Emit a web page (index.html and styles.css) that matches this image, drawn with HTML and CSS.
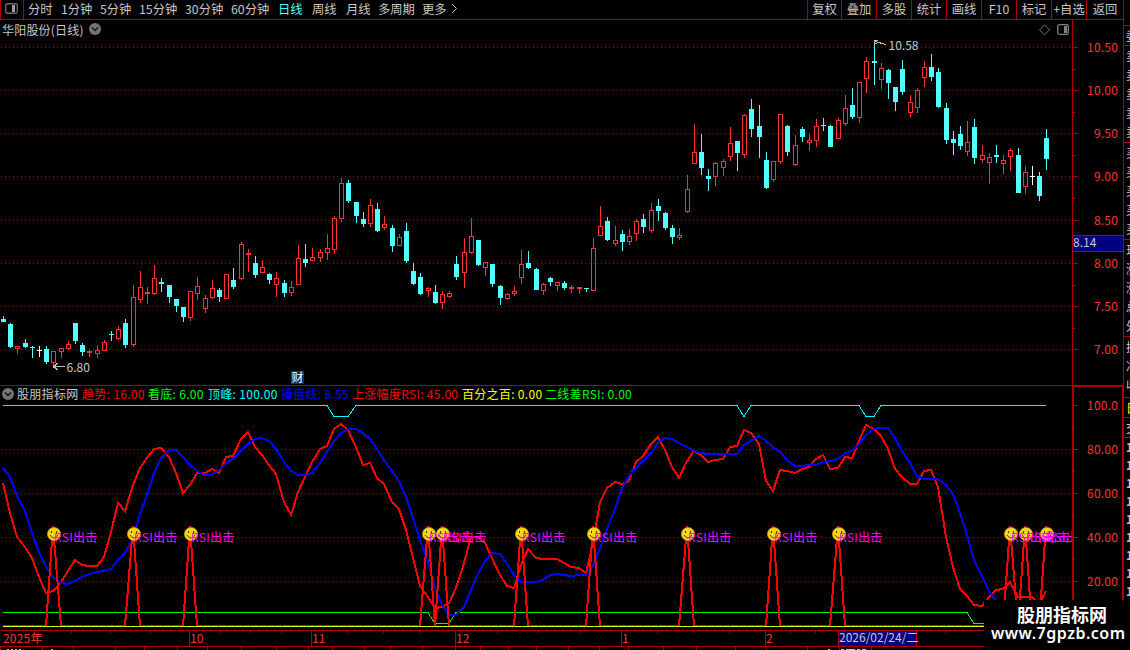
FILE: index.html
```html
<!DOCTYPE html>
<html lang="zh-CN">

<head>
    <meta charset="UTF-8">
    <meta name="viewport" content="width=device-width, initial-scale=1.0">
    <title>华阳股份(日线)</title>
    <link rel="stylesheet" href="styles.css">
    <script src="chart.js"></script>
</head>

<body>
    <div class="app">
        <!-- 左侧主区域 -->
        <div class="main">
            <!-- 顶部工具栏 -->
            <div class="toolbar">
                <div class="layout-btn">
                    <svg width="13" height="11" viewBox="0 0 13 11">
                        <rect x=".75" y=".75" width="11.5" height="9.5" rx="1.5" fill="none" stroke="#707070" stroke-width="1.3" />
                        <rect x="7" y="2" width="3" height="7" fill="#a0a0a0" />
                    </svg>
                </div>
                <ul class="periods">
                    <li>分时</li>
                    <li>1分钟</li>
                    <li>5分钟</li>
                    <li>15分钟</li>
                    <li>30分钟</li>
                    <li>60分钟</li>
                    <li class="active">日线</li>
                    <li>周线</li>
                    <li>月线</li>
                    <li>多周期</li>
                    <li>更多</li>
                    <li>
                        <svg width="7" height="11" viewBox="0 0 7 11">
                            <path d="M1 1L5.5 5.5L1 10" fill="none" stroke="#c0c0c0" />
                        </svg>
                    </li>
                </ul>
                <ul class="tools">
                    <li>复权</li>
                    <li>叠加</li>
                    <li>多股</li>
                    <li>统计</li>
                    <li>画线</li>
                    <li>F10</li>
                    <li>标记</li>
                    <li>+自选</li>
                    <li>返回</li>
                </ul>
            </div>

            <div class="panes">
                <!-- K线图 -->
                <div class="pane">
                    <div class="title">
                        <span>华阳股份(日线)</span>
                        <svg class="arrow" width="12" height="12" viewBox="0 0 12 12">
                            <circle cx="6" cy="6" r="6" fill="#747474" />
                            <path d="M3 4.5L6 7.5L9 4.5" fill="none" stroke="#111" stroke-width="1.3" />
                        </svg>
                        <svg class="corner" width="30" height="12" viewBox="0 0 30 12">
                            <path d="M5.5 .8L10.5 5.8L5.5 10.8L.5 5.8Z" fill="none" stroke="#747474" />
                            <rect x="18.7" y=".7" width="10.6" height="9.6" rx="1.5" fill="none" stroke="#808080" stroke-width="1.3" />
                            <rect x="25" y="2" width="3" height="7" fill="#808080" />
                        </svg>
                    </div>
                    <svg id="kline" width="1072" height="345" viewBox="0 40 1072 345"></svg>
                </div>
                <svg id="priceAxis" class="axis" width="52" height="365" viewBox="1072 20 52 365"></svg>

                <!-- 指标图 -->
                <div class="pane pane-rsi">
                    <div class="legend">
                        <svg class="arrow" width="12" height="12" viewBox="0 0 12 12">
                            <circle cx="6" cy="6" r="6" fill="#747474" />
                            <path d="M3 4.5L6 7.5L9 4.5" fill="none" stroke="#111" stroke-width="1.3" />
                        </svg>
                        <span>股朋指标网</span>
                        <span class="red">趋势: 16.00</span>
                        <span class="green">看底: 6.00</span>
                        <span class="cyan">顶峰: 100.00</span>
                        <span class="blue">操盘线: 8.55</span>
                        <span class="red">上涨幅度RSI: 45.00</span>
                        <span class="yellow">百分之百: 0.00</span>
                        <span class="green">二线差RSI: 0.00</span>
                    </div>
                    <svg id="rsi" width="1072" height="228" viewBox="0 402 1072 228"></svg>
                </div>
                <svg id="rsiAxis" class="axis" width="52" height="245" viewBox="1072 385 52 245"></svg>

                <!-- 日期轴 -->
                <svg id="dates" class="dates" width="1124" height="20" viewBox="0 630 1124 20"></svg>
            </div>
        </div>

        <!-- 右侧盘口，只露出左边缘 -->
        <div class="quote">
            <div class="box head"></div>
            <div class="box one"><p>委</p></div>
            <div class="box five"><p>卖</p><p>卖</p><p>卖</p><p>卖</p><p>卖</p></div>
            <div class="box five"><p>买</p><p>买</p><p>买</p><p>买</p><p>买</p></div>
            <div class="box five"><p>现</p><p>涨</p><p>涨</p><p>总</p><p>外</p></div>
            <div class="box three"><p>换</p><p>净</p><p>收</p></div>
            <div class="box one yellow"><p>日</p></div>
            <div class="box one"><p>交</p></div>
            <div class="box ticks">
                <p>14</p><p>14</p><p>14</p><p>14</p><p>14</p><p>14</p><p>14</p><p>14</p><p>14</p>
            </div>
        </div>

        <!-- 水印 -->
        <div class="watermark">
            <p class="name">股朋指标网</p>
            <p class="site">www.7gpzb.com</p>
        </div>
    </div>
</body>

</html>
```

FILE: styles.css
```css
* {
    margin: 0;
    padding: 0;
    box-sizing: border-box;
}

body {
    background-color: #000;
    color: #c8c8c8;
    font-family: "Noto Sans CJK SC", "Liberation Sans", sans-serif;
    font-size: 12px;
    font-weight: 400;
    overflow: hidden;
}

ul {
    list-style: none;
}

svg {
    display: block;
}

.app {
    width: 1130px;
    height: 650px;
    position: relative;
    display: flex;
    overflow: hidden;
}

.main {
    width: 1124px;
    flex: none;
}

/* 工具栏 */
.toolbar {
    height: 20px;
    display: flex;
    border-bottom: 1px solid #b00000;
    border-right: 1px solid #b00000;
    line-height: 18px;
    white-space: nowrap;
}

.layout-btn {
    width: 24px;
    padding: 3px 0 0 4px;
    border-left: 1px solid #b00000;
    border-right: 1px solid #b00000;
}

.periods {
    display: grid;
    grid-template-columns: 33px 39px 39px 46px 46px 47px 34px 34px 32px 44px 29px 30px;
    padding-left: 4px;
    font-size: 12.3px;
}

.periods svg {
    margin-top: 3px;
}

.periods .active {
    color: #54ffff;
}

.tools {
    margin-left: auto;
    display: flex;
    font-size: 12.3px;
}

.tools li {
    width: 35px;
    border-left: 1px solid #b00000;
    text-align: center;
}

.tools li:first-child {
    width: 34px;
}

.tools li:last-child {
    width: 37px;
}

/* 图表区 */
.panes {
    display: grid;
    grid-template-columns: 1072px 52px;
    grid-template-rows: 365px 245px 20px;
}

.title {
    height: 20px;
    padding: 0 3px 1px 2px;
    display: flex;
    align-items: center;
    line-height: 18px;
    letter-spacing: .2px;
}

.title .arrow {
    margin-left: 5px;
    margin-top: -1px;
}

.title .corner {
    margin-left: auto;
}

.pane-rsi {
    border-top: 1px solid #b00000;
}

.legend {
    height: 16px;
    padding-left: 2px;
    display: grid;
    grid-template-columns: 15px 65px 66px 60px 73px 71px 110px 83px auto;
    align-items: center;
    line-height: 16px;
    letter-spacing: .3px;
    white-space: nowrap;
}

.dates {
    grid-column: 1 / 3;
}

.red {
    color: #ff0000;
}

.green {
    color: #00ff00;
}

.cyan {
    color: #00ffff;
}

.blue {
    color: #0000ff;
}

.yellow {
    color: #ffff00;
}

/* svg里的线和文字 */
.line {
    fill: none;
    stroke-width: 1;
    shape-rendering: crispEdges;
}

.curve {
    fill: none;
    stroke-width: 2;
    shape-rendering: crispEdges;
}

.grid {
    stroke: #a00000;
    stroke-dasharray: 1 3;
    stroke-dashoffset: -1;
}

.frame {
    stroke: #b00000;
}

.label {
    fill: #ff3232;
    letter-spacing: .2px;
}

.mark {
    fill: #c8c8c8;
}

.signal {
    fill: #ff00ff;
    letter-spacing: .3px;
}

/* 右侧盘口 */
.quote {
    width: 6px;
    flex: none;
    overflow: hidden;
}

.box {
    padding-left: 2px;
    border-bottom: 1px solid #b00000;
    overflow: hidden;
}

.box p {
    width: 24px;
    height: 19px;
    line-height: 19px;
}

.head {
    height: 26px;
}

.one {
    height: 20px;
}

.five {
    height: 97px;
}

.three {
    height: 61px;
}

.ticks {
    height: 213px;
    border: 0;
}

.ticks p {
    height: 18px;
    line-height: 18px;
    font-weight: bold;
}

/* 水印 */
.watermark {
    position: absolute;
    left: 984px;
    top: 600px;
    width: 146px;
    height: 50px;
    background-color: #000;
    color: #fff;
    white-space: nowrap;
}

.watermark .name {
    padding-left: 33px;
    padding-top: 3px;
    font-size: 18px;
    line-height: 22px;
    font-weight: bold;
}

.watermark .site {
    padding-left: 7px;
    font-family: "Noto Sans", sans-serif;
    font-size: 16px;
    line-height: 16px;
    font-weight: 600;
    letter-spacing: .5px;
}
```

FILE: chart.js
```js
//每根K线：颜色,最高,实体上沿,实体下沿,最低
var bars = [
    'd,316,319,322,322', 'd,323,324,347,348', 'u,346,346,349,354', 'd,339,343,347,348', 'd,346,347,348,358',
    'w,346,350,351,357', 'd,346,349,362,364', 'u,351,351,363,366', 'u,348,348,352,358', 'u,341,344,349,350',
    'd,323,323,341,344', 'd,343,345,352,356', 'u,350,351,353,357', 'u,345,350,354,358', 'u,340,342,351,351',
    'd,331,334,335,341', 'u,326,329,339,340', 'd,319,323,345,348', 'u,285,297,345,347', 'u,271,287,300,303',
    'u,287,292,294,304', 'u,265,278,294,295', 'd,278,282,284,292', 'd,285,285,297,303', 'd,299,299,306,312',
    'd,307,307,317,322', 'u,291,291,318,321', 'u,277,286,294,300', 'u,295,298,309,313', 'u,280,288,298,299',
    'd,288,290,297,302', 'u,274,274,299,299', 'd,268,280,287,289', 'u,242,244,279,280', 'u,249,253,255,272',
    'd,256,263,275,278', 'u,260,267,273,273', 'd,273,274,280,284', 'u,272,278,285,297', 'd,280,283,293,297',
    'u,281,287,293,296', 'u,245,258,285,285', 'd,244,259,263,267', 'u,248,257,261,261', 'u,249,252,258,262',
    'u,234,248,253,260', 'u,216,218,250,254', 'u,178,183,219,222', 'd,180,183,201,203', 'd,202,202,216,223',
    'd,212,219,224,227', 'u,199,205,224,227', 'd,203,209,231,232', 'u,216,224,228,230', 'd,225,228,246,252',
    'u,234,237,246,246', 'd,223,231,261,263', 'd,263,271,284,285', 'd,273,277,294,295', 'u,287,288,291,297',
    'd,285,292,303,304', 'u,291,294,303,309', 'u,291,293,297,298', 'd,256,264,277,280', 'u,238,252,273,288',
    'u,218,236,253,254', 'd,240,240,265,266', 'u,262,262,268,276', 'd,264,264,284,287', 'd,285,286,298,305',
    'u,293,294,299,300', 'u,286,291,294,296', 'u,250,264,278,284', 'd,251,263,268,269', 'd,268,269,290,290',
    'u,283,284,291,295', 'd,277,278,282,286', 'u,282,282,286,291', 'd,281,283,288,290', 'u,285,287,289,293',
    'u,287,287,289,294', 'd,288,288,289,292', 'u,238,248,291,291', 'u,206,226,236,236', 'd,217,221,240,241',
    'u,226,240,244,246', 'd,230,234,242,251', 'u,229,236,242,245', 'u,219,221,234,241', 'd,214,219,227,233',
    'u,203,210,231,233', 'd,199,206,211,221', 'd,212,213,228,230', 'd,225,228,237,244', 'u,228,235,238,240',
    'u,175,189,212,213', 'u,124,152,164,164', 'd,134,152,168,175', 'd,169,176,179,191', 'u,162,163,177,186',
    'u,159,161,168,176', 'u,127,143,157,161', 'd,141,141,153,171', 'u,114,115,155,158', 'd,99,109,129,137',
    'd,105,126,137,158', 'd,152,160,188,189', 'u,161,161,180,182', 'u,114,114,162,164', 'd,125,126,152,156',
    'u,135,145,165,166', 'd,127,129,137,142', 'u,134,140,143,151', 'u,119,126,141,147', 'd,118,125,126,131',
    'd,125,126,147,147', 'u,118,120,139,139', 'u,95,108,124,126', 'd,88,105,117,119', 'u,82,82,118,123',
    'u,57,61,79,93', 'd,41,61,63,85', 'u,63,68,80,89', 'd,69,70,83,99', 'd,87,87,102,111',
    'd,60,69,92,95', 'u,95,102,113,117', 'u,88,90,108,113', 'u,61,67,78,87', 'd,54,67,77,81',
    'd,68,72,107,108', 'd,103,108,140,144', 'd,131,139,143,155', 'd,126,134,146,150', 'u,121,142,152,156',
    'd,119,127,158,164', 'u,145,155,160,163', 'u,153,157,163,184', 'd,145,155,157,163', 'u,155,160,164,174',
    'u,148,150,157,171', 'd,148,155,193,193', 'u,166,172,187,194', 'w,166,176,177,185', 'd,172,176,196,201',
    'd,129,138,159,170'
];

//趋势线
var trend = [
    483, 513, 537, 547, 558, 577, 593, 591, 582, 571, 560, 565, 566, 566, 557, 532, 503, 511, 485, 468,
    458, 449, 448, 457, 473, 493, 485, 473, 473, 469, 473, 457, 456, 439, 432, 447, 455, 465, 474, 502,
    515, 492, 477, 462, 449, 446, 429, 424, 430, 447, 465, 463, 478, 484, 502, 509, 530, 558, 586, 597,
    608, 607, 603, 588, 563, 537, 537, 543, 558, 575, 586, 588, 565, 549, 558, 559, 559, 559, 563, 567,
    568, 573, 543, 502, 488, 482, 484, 481, 462, 456, 444, 437, 450, 467, 478, 461, 451, 455, 462, 460,
    459, 447, 446, 430, 433, 444, 481, 491, 470, 471, 473, 469, 467, 459, 455, 469, 468, 457, 458, 441,
    425, 429, 436, 449, 469, 477, 484, 484, 471, 470, 487, 537, 567, 589, 596, 605, 606, 597, 590, 589,
    582, 597, 597, 597, 604, 591
];

//操盘线
var trade = [
    468, 477, 496, 511, 533, 552, 567, 577, 583, 584, 581, 577, 574, 572, 571, 569, 560, 553, 539, 514,
    495, 473, 458, 450, 450, 457, 465, 471, 475, 475, 470, 463, 459, 451, 444, 439, 438, 441, 449, 462,
    471, 475, 475, 473, 463, 452, 441, 433, 429, 429, 433, 439, 449, 460, 471, 481, 497, 518, 540, 562,
    588, 605, 615, 615, 607, 590, 574, 561, 553, 554, 564, 575, 582, 582, 582, 580, 575, 574, 575, 576,
    575, 575, 566, 548, 529, 509, 488, 476, 468, 461, 453, 443, 438, 439, 443, 447, 451, 453, 454, 454,
    454, 454, 454, 445, 441, 436, 441, 447, 452, 460, 466, 466, 465, 465, 462, 461, 459, 453, 451, 444,
    435, 429, 428, 428, 438, 451, 463, 476, 479, 479, 479, 485, 494, 513, 535, 560, 576, 591, 601, 607
];

//出击信号所在的K线
var signals = [7, 18, 26, 59, 61, 72, 82, 95, 107, 116, 140, 142, 145];
//顶峰和看底线下折的K线
var peaks = [46, 47, 48, 103, 120, 121];
var lows = [60, 61, 62, 135, 136, 137, 138, 139, 140];

var colors = { u: '#ff3232', d: '#54ffff', w: '#ffffff' };

//第i根K线的横坐标
function getX(i) {
    return Math.floor(3.6 + 7.1946 * i);
}

function hline(x1, x2, y, cls) {
    return '<path class="line ' + cls + '" d="M' + x1 + ' ' + (y + .5) + 'H' + x2 + '"/>';
}

function vline(x, y1, y2, cls) {
    return '<path class="line ' + cls + '" d="M' + (x + .5) + ' ' + y1 + 'V' + y2 + '"/>';
}

function rect(x, y, w, h, color) {
    return '<rect x="' + x + '" y="' + y + '" width="' + w + '" height="' + h + '" fill="' + color + '"/>';
}

function text(x, y, str, cls, anchor) {
    return '<text x="' + x + '" y="' + y + '" class="' + cls + '" text-anchor="' + (anchor || 'start') + '">' + str + '</text>';
}

function curve(points, color, cls) {
    return '<polyline class="' + cls + '" stroke="' + color + '" points="' + points.join(' ') + '"/>';
}

//K线图
function drawKline() {
    var html = '';
    var ys = [47, 90, 133, 176, 220, 263, 306, 349];
    for (var i = 0; i < ys.length; i++) {
        html += hline(0, 1072, ys[i], 'grid');
    }
    for (var i = 0; i < bars.length; i++) {
        var b = bars[i].split(',');
        var x = getX(i);
        var high = +b[1], top = +b[2], bottom = +b[3], low = +b[4];
        var color = colors[b[0]];
        if (b[0] == 'u' && bottom - top > 2) {
            //阳线空心
            html += rect(x, high, 1, top - high, color);
            html += rect(x, bottom, 1, low - bottom, color);
            html += '<rect x="' + (x - 1.5) + '" y="' + (top + .5) + '" width="4" height="' + (bottom - top - 1) + '" fill="none" stroke="' + color + '"/>';
        } else {
            html += rect(x, high, 1, low - high, color);
            html += rect(x - 2, top, 5, bottom - top, color);
        }
    }
    //最高价和最低价
    html += '<path class="line" stroke="#c0c0c0" d="M875 41.5L886 44.5M874.5 45V40.5H878M875 43.5H877"/>';
    html += text(888.5, 50, '10.58', 'mark');
    html += '<path class="line" stroke="#c0c0c0" d="M54 366.5H65M54 366.5L57.5 363M54 366.5L57.5 370"/>' + rect(53, 365, 3, 3, '#c0c0c0');
    html += text(66.5, 372, '6.80', 'mark');
    //财报标记
    html += rect(291, 371, 13, 13, '#003870') + '<text x="291.5" y="382" fill="#fff">财</text>';
    document.getElementById('kline').innerHTML = html;
}

//价格轴
function drawPriceAxis() {
    var ys = [47, 90, 133, 176, 220, 263, 306, 349];
    var html = vline(1072, 20, 385, 'frame') + vline(1123, 20, 385, 'frame');
    for (var i = 0; i < ys.length; i++) {
        html += hline(1073, 1078, ys[i], 'frame');
        if (i < 7) {
            html += hline(1073, 1075, ys[i] + 22, 'frame');
        }
        html += text(1118, ys[i] + 5, (10.5 - i * .5).toFixed(2), 'label', 'end');
    }
    html += rect(1073, 236, 50, 15, '#000080') + hline(1072, 1123, 235, 'frame') + hline(1072, 1123, 251, 'frame');
    html += text(1073, 247, '8.14', 'mark');
    document.getElementById('priceAxis').innerHTML = html;
}

//指标图
function drawRsi() {
    var html = '';
    for (var i = 1; i < 5; i++) {
        html += hline(0, 1072, 405 + i * 44, 'grid');
    }
    var top = [], bottom = [], red = [], blue = [], spike = [];
    for (var i = 0; i < bars.length; i++) {
        var x = getX(i);
        top.push(x + ',' + (peaks.indexOf(i) > -1 ? 416.5 : 405.5));
        bottom.push(x + ',' + (lows.indexOf(i) > -1 ? 623.5 : 612.5));
        spike.push(x + ',' + (signals.indexOf(i) > -1 ? 526 : 626));
        red.push(x + ',' + trend[i]);
        if (i < trade.length) {
            blue.push(x + ',' + trade[i]);
        }
    }
    html += curve(top, '#00ffff', 'line');
    html += curve(bottom, '#00ff00', 'line');
    html += curve(red, '#ff0000', 'curve');
    html += curve(blue, '#0000ff', 'curve');
    html += curve(spike, '#ff0000', 'curve');
    html += '<path class="line" stroke="#ffff00" d="M3 626.5H1047"/>';
    html += '<path class="line" stroke="#00ff00" stroke-dasharray="1 7" d="M10 626.5H1047"/>';
    //笑脸
    for (var i = 0; i < signals.length; i++) {
        var x = getX(signals[i]) + 1;
        html += '<circle cx="' + x + '" cy="534" r="6.6" fill="#f4d41c" stroke="#b89000" stroke-width=".8"/>';
        html += rect(x - 3, 531, 1, 2, '#503000') + rect(x + 2, 531, 1, 2, '#503000');
        html += '<path d="M' + (x - 4) + ' 535Q' + x + ' 541 ' + (x + 4) + ' 535" fill="none" stroke="#604000"/>';
    }
    for (var i = 0; i < signals.length; i++) {
        html += text(getX(signals[i]) + 1, 541.5, 'RSI出击', 'signal');
    }
    document.getElementById('rsi').innerHTML = html;
}

//指标轴
function drawRsiAxis() {
    var html = '<rect class="curve frame" x="1073" y="386" width="50" height="260"/>';
    var names = ['100.0', '80.00', '60.00', '40.00', '20.00'];
    for (var i = 0; i < names.length; i++) {
        var y = 405 + i * 44;
        html += hline(1074, 1078, y, 'frame') + hline(1074, 1075, y + 22, 'frame');
        html += text(1118, y + 5, names[i], 'label', 'end');
    }
    document.getElementById('rsiAxis').innerHTML = html;
}

//日期轴
function drawDates() {
    var html = hline(0, 1072, 630, 'frame') + hline(0, 1072, 646, 'frame');
    var ticks = [71, 110, 150, 220, 250, 281, 347, 383, 419, 497, 538, 580, 657, 693, 729, 790, 815, 945];
    var months = [[189, '10'], [311, '11'], [455, '12'], [621, '1'], [765, '2']];
    var tabs = [0, 42, 73, 115, 144, 177, 207, 241, 276, 308, 332, 364, 390, 422, 455, 480, 508, 536, 568, 599, 628, 663, 696, 735, 766, 807, 839, 871];
    for (var i = 0; i < ticks.length; i++) {
        html += vline(ticks[i], 631, 633, 'frame');
    }
    for (var i = 0; i < tabs.length; i++) {
        html += vline(tabs[i], 647, 650, 'frame');
    }
    html += text(3, 643, '2025年', 'label');
    for (var i = 0; i < months.length; i++) {
        html += vline(months[i][0], 631, 646, 'frame');
        html += text(months[i][0] + 1, 643, months[i][1], 'label');
    }
    html += rect(839, 631, 77, 15, '#000080') + vline(838, 631, 646, 'frame') + vline(916, 631, 646, 'frame');
    html += text(839, 642, '2026/02/24/二', 'mark');
    //下一行文字的顶部
    html += '<path class="line" stroke="#c0c0c0" stroke-dasharray="2 2" d="M7 649.5H21M51 649.5H53M828 649.5H831"/>';
    html += '<path class="line" stroke="#54ffff" stroke-dasharray="3 2 9 2" d="M841 649.5H866"/>';
    document.getElementById('dates').innerHTML = html;
}

window.onload = function () {
    drawKline();
    drawPriceAxis();
    drawRsi();
    drawRsiAxis();
    drawDates();
}
```
